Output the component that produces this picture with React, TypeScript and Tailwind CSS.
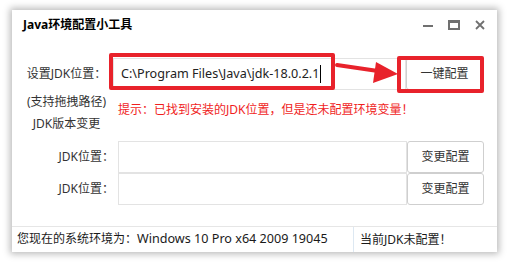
import React from "react";

const font = { fontFamily: '"Noto Sans", "Noto Sans CJK SC", sans-serif' };

const JdkRow = () => (
    <div className="flex h-[32px]">
        <div className="w-[106px] flex items-center justify-end pr-[4px] text-[12px] text-[#333]">JDK位置：</div>
        <div className="w-[289px] border border-[#e3e3e3] bg-white"></div>
        <button className="w-[77px] border border-[#cfcfcf] rounded-[3px] bg-white text-[12px] text-[#333]">
            变更配置
        </button>
    </div>
);

export default function App() {
    return (
        <div className="w-[515px] h-[265px] bg-white overflow-hidden" style={font}>
            <div className="relative ml-[12px] mt-[10px] w-[485px] h-[242px] bg-white shadow-[0_0_7px_2px_rgba(0,0,0,0.28)] flex flex-col">
                {/* title bar */}
                <div className="h-[30px] flex items-center justify-between pl-[11px] pr-[12px]">
                    <span className="text-[12px] font-bold text-black">Java环境配置小工具</span>
                    <div className="flex items-center gap-[15px] text-[#707070]">
                        <svg width="10" height="12" viewBox="0 0 10 12">
                            <rect x="0" y="6" width="10" height="2" fill="currentColor" />
                        </svg>
                        <svg width="12" height="12" viewBox="0 0 12 12">
                            <rect x="1" y="2" width="10" height="8" fill="none" stroke="currentColor" strokeWidth="2" />
                            <rect x="0" y="1" width="12" height="3" fill="currentColor" />
                        </svg>
                        <svg width="10" height="12" viewBox="0 0 10 12">
                            <path d="M1 2 L9 10 M9 2 L1 10" stroke="currentColor" strokeWidth="1.8" />
                        </svg>
                    </div>
                </div>

                {/* jdk path */}
                <div className="flex h-[32px] mt-[18px]">
                    <div className="w-[101px] pl-[14px]">
                        <div className="w-[81px] h-full flex items-center justify-center text-[12px] text-[#333]">
                            设置JDK位置：
                        </div>
                    </div>
                    <div className="w-[293px] border border-[#e3e3e3] flex items-center pl-[7px] text-[12.6px] text-[#222]">
                        C:\Program Files\Java\jdk-18.0.2.1
                        <span className="w-px h-[18px] bg-black ml-px"></span>
                    </div>
                    <button className="w-[77px] border border-[#cfcfcf] rounded-[3px] bg-white text-[12px] text-[#333]">
                        一键配置
                    </button>
                </div>

                <div className="flex h-[51px]">
                    <div className="w-[106px] pl-[14px] pt-[1px]">
                        <div className="w-[81px] text-center text-[12px] leading-[22px] text-[#333]">
                            <div>(支持拖拽路径)</div>
                            <div>JDK版本变更</div>
                        </div>
                    </div>
                    <div className="pt-[10px] text-[12px] leading-[20px] text-[#f01e1e]">
                        提示：已找到安装的JDK位置，但是还未配置环境变量！
                    </div>
                </div>

                <JdkRow />
                <JdkRow />

                <div className="flex-1"></div>

                {/* status bar */}
                <div className="h-[26px] border-t border-[#e6e6e6] flex items-center text-[12px] text-[#1a1a1a]">
                    <div className="w-[341px] pl-[5px]">
                        您现在的系统环境为：<span className="text-[12.6px]">Windows 10 Pro x64 2009 19045</span>
                    </div>
                    <div className="h-full border-l border-[#dde8f2] pl-[6px] flex items-center">当前JDK未配置！</div>
                </div>

                {/* annotations */}
                <div className="absolute left-[97px] top-[43px] w-[226px] h-[37px] border-[4px] border-[#e8222b] rounded-[2px]"></div>
                <div className="absolute left-[385px] top-[46px] w-[87px] h-[37px] border-[4px] border-[#e8222b] rounded-[2px]"></div>
                <svg className="absolute left-0 top-0" width="485" height="242" viewBox="0 0 485 242">
                    <path d="M325 55 L366 61" stroke="#e8222b" strokeWidth="4" strokeLinecap="round" />
                    <polygon points="386,64 364,52 361,73" fill="#e8222b" />
                </svg>
            </div>
        </div>
    );
}
